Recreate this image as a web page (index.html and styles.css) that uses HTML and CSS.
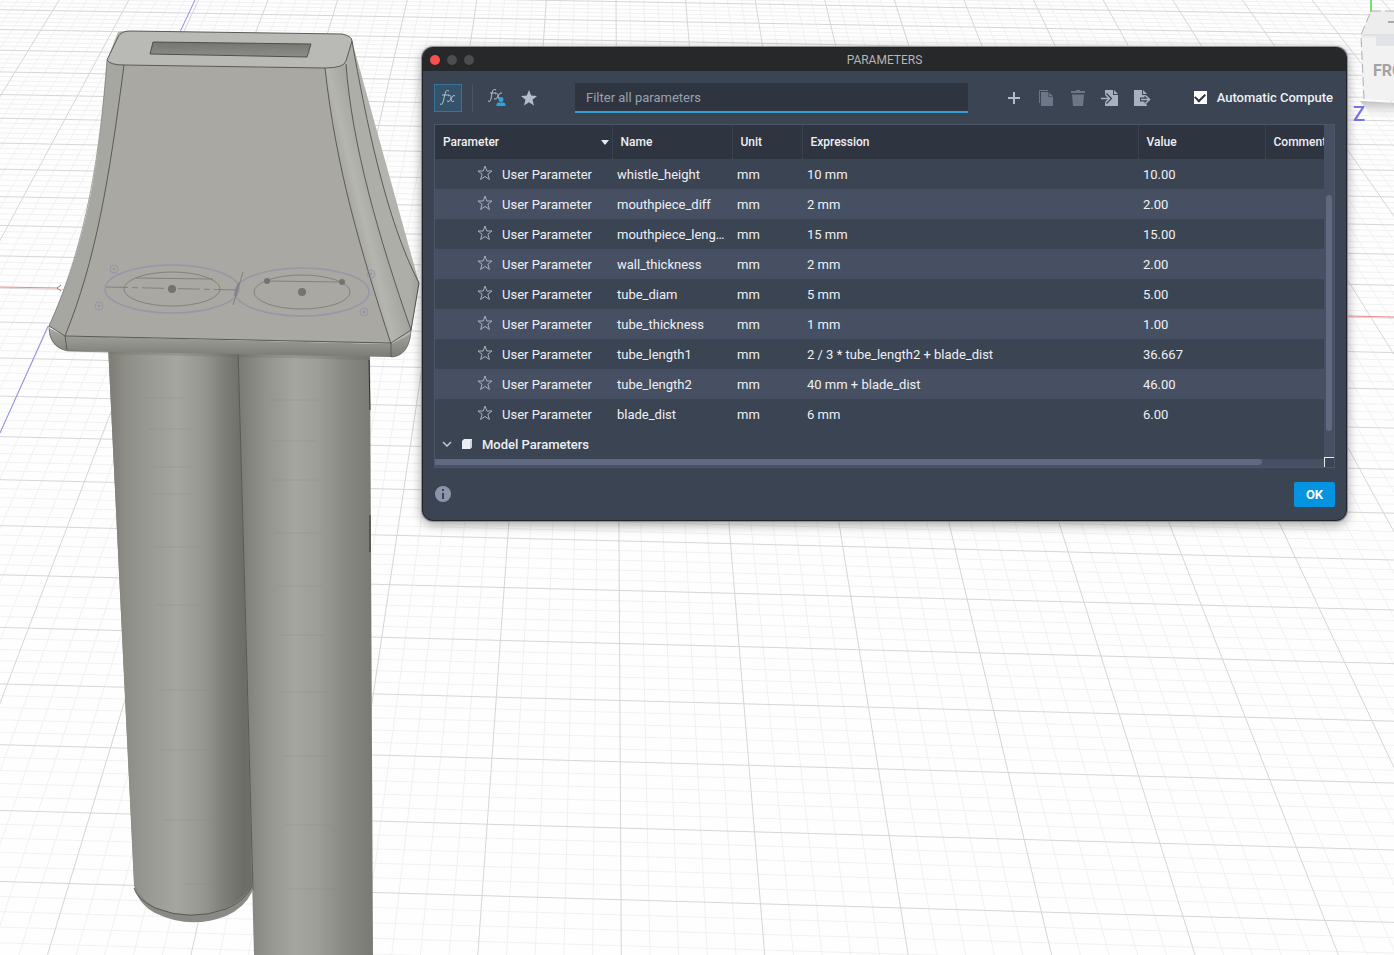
FILE: index.html
```html
<!DOCTYPE html>
<html lang="en">
<head>
<meta charset="utf-8">
<title>Parameters</title>
<link rel="stylesheet" href="styles.css">
</head>
<body>
<svg class="viewport" viewBox="0 0 1394 955" preserveAspectRatio="xMinYMin slice" aria-label="3D model view">
  <defs>
    <linearGradient id="tubeL" gradientUnits="userSpaceOnUse" x1="112" y1="0" x2="243" y2="0">
      <stop offset="0" stop-color="#80807a"/><stop offset=".1" stop-color="#8d8d86"/><stop offset=".3" stop-color="#9a9b94"/><stop offset=".5" stop-color="#a5a69f"/><stop offset=".7" stop-color="#95968f"/><stop offset=".88" stop-color="#7b7b76"/><stop offset="1" stop-color="#6e6e69"/>
    </linearGradient>
    <linearGradient id="tubeR" gradientUnits="userSpaceOnUse" x1="240" y1="0" x2="370" y2="0">
      <stop offset="0" stop-color="#7b7b76"/><stop offset=".2" stop-color="#92938c"/><stop offset=".42" stop-color="#a5a69f"/><stop offset=".6" stop-color="#9d9e97"/><stop offset=".8" stop-color="#898983"/><stop offset="1" stop-color="#7b7b76"/>
    </linearGradient>
    <linearGradient id="lip" x1="0" y1="0" x2="0" y2="1">
      <stop offset="0" stop-color="#a9a9a3"/><stop offset=".5" stop-color="#94948e"/><stop offset="1" stop-color="#7b7b76"/>
    </linearGradient>
    <linearGradient id="slot" x1="0" y1="0" x2="0" y2="1">
      <stop offset="0" stop-color="#74756f"/><stop offset="1" stop-color="#8d8e87"/>
    </linearGradient>
    <linearGradient id="edgeR" gradientUnits="userSpaceOnUse" x1="345" y1="200" x2="378" y2="192">
      <stop offset="0" stop-color="#a3a39d"/><stop offset=".4" stop-color="#b5b6b0"/><stop offset="1" stop-color="#a2a39c"/>
    </linearGradient>
    <linearGradient id="cubeShade" x1="0" y1="0" x2="0" y2="1">
      <stop offset="0" stop-color="#bdbdbd"/><stop offset="1" stop-color="#fff" stop-opacity="0"/>
    </linearGradient>
  </defs>
  <rect width="1394" height="955" fill="#fefefe"/>
  <g id="grid"></g>
  <path d="M195 0L180 32M48 326L0 433" stroke="#8d8de8" fill="none"/>
  <path d="M0 287L58 288M1347 316L1394 317" stroke="#e58c8c" fill="none"/>
  <path d="M61 285L57 288L61 291" stroke="#b06a6a" fill="none"/>

  <g class="tubes">
    <path d="M108 345L134 885Q137 903 155 913Q190 930 226 916Q244 908 252 892L252 345Z" fill="#8a8a84"/>
    <path d="M108 345L134 880Q137 897 155 907Q190 922 226 908Q246 898 252 885L243 345Z" fill="url(#tubeL)"/>
    <path d="M134 888Q137 899 155 908Q190 922 226 909Q246 900 252 886" class="edge"/>
    <path d="M238 345L254 955L373 955L370 345Z" fill="url(#tubeR)"/>
    <path d="M238 350L245 600L253 890" class="edge"/>
    <path d="M369 360L370 410M370 515L370 552" stroke="#30302e"/>
    <path class="mark" d="M145 398H184M148 429H190M151 467H190M152 494H193M154 547H200M156 605H200M158 690H207M160 750H208M163 820H209M184 884H210M270 400H318M272 441H316M273 480H318M275 533H322M277 586H323M279 635H325M281 692H327M283 756H330M285 825H331M288 889H334"/>
    <path d="M109 350H369V360L109 354Z" fill="#666661" opacity=".25"/>
  </g>
  <path d="M49 328C48 340 56 350 68 351L391 357C403 357 410 347 411 333L391 344L65 336Z" fill="url(#lip)"/>
  <path d="M118 32Q122 31 130 31L342 35Q350 36 352 41L419 283L411 333L391 344L65 336L49 326C89 240 98 170 107 60Z" fill="#b3b4ae"/>
  <path d="M124 65L325 68C336 168 360 248 391 344L65 336C96 260 109 180 124 65Z" fill="#a9a8a2"/>
  <path d="M107 62L124 65C109 180 96 260 65 336L49 326C88 240 100 160 107 62Z" fill="#a6a7a1"/>
  <path d="M325 68L346 65C353 150 378 235 411 330L391 344C360 248 336 168 325 68Z" fill="url(#edgeR)"/>
  <path d="M352 41L346 64C352 145 378 235 410 330L419 283C386 220 366 120 352 41Z" fill="#adaea8"/>
  <path d="M107 60L118 37Q121 31 130 31L342 34Q352 36 352 41L346 61Q344 68 325 68L124 65Q110 65 107 60Z" fill="#b9bab5"/>
  <path d="M153 42L311 44L307 57L150 54Z" fill="url(#slot)" stroke="#4f504c"/>
  <path d="M155 43L156 51L310 53" fill="none" stroke="#858680"/>
  <g class="edge">
    <path d="M107 60L118 37Q121 31 130 31L342 34Q352 36 352 41L346 61Q344 68 325 68L124 65Q110 65 107 60Z"/>
    <path d="M124 65C109 180 96 260 65 336M325 68C336 168 360 248 391 344M346 64C352 145 378 235 411 330"/>
    <path d="M352 41C366 120 386 220 419 283L411 330L391 343L65 336L49 326M65 336L67 350M391 343V357"/>
    <path d="M107 60C100 150 88 240 49 326C49 340 56 349 68 351L108 352" opacity=".55"/>
    <path d="M391 357C403 357 410 347 411 330" opacity=".55"/>
  </g>
  <g class="sketch">
    <ellipse cx="172" cy="289" rx="67" ry="24"/><ellipse cx="302" cy="292" rx="67" ry="24"/>
    <circle cx="114" cy="269" r="4"/><circle cx="99" cy="306" r="4"/><circle cx="371" cy="274" r="4"/><circle cx="364" cy="312" r="4"/>
    <g fill="#8984ac"><circle cx="114" cy="269" r="1"/><circle cx="99" cy="306" r="1"/><circle cx="371" cy="274" r="1"/><circle cx="364" cy="312" r="1"/></g>
  </g>
  <g class="construction">
    <ellipse cx="172" cy="289" rx="48" ry="17"/><ellipse cx="302" cy="292" rx="48" ry="17"/>
    <path d="M136 278L213 279M267 281L342 282M243 272L233 305"/>
    <path d="M106 287L238 290" stroke-dasharray="22 4 6 4"/>
    <path d="M239 283L235 296" stroke-width="2"/>
    <g fill="#73746f" stroke="none"><circle cx="172" cy="289" r="4"/><circle cx="302" cy="292" r="4"/><circle cx="267" cy="281" r="3"/><circle cx="342" cy="282" r="3"/></g>
  </g>

  <g class="cube">
    <path d="M1360 101L1394 103V122L1372 116Z" fill="url(#cubeShade)"/>
    <path d="M1363 98L1361 35L1371 11H1394V101Z" fill="#ededed"/>
    <path d="M1362 38H1394V101L1363 99Z" fill="#f2f2f2"/>
    <path d="M1376 36H1394V46H1376Z" fill="#e2e3e8"/>
    <path d="M1364 99L1361 35L1371 11H1394" fill="none" stroke="#b0b0b0" stroke-dasharray="9 4"/>
    <path d="M1362 35H1394" stroke="#d4d4d4"/>
    <path d="M1388 22H1394" stroke="#a9a9a9" stroke-width="2"/>
    <path d="M1371 0V12" stroke="#76df76" stroke-width="2"/>
    <text x="1373" y="76" class="cube-face">FRO</text>
    <text x="1353" y="121" class="cube-axis">Z</text>
  </g>
</svg>

<section class="dialog" role="dialog" aria-labelledby="dialog-title">
  <header class="titlebar">
    <div class="lights"><button class="light light-close" aria-label="Close"></button><button class="light" aria-label="Minimize"></button><button class="light" aria-label="Zoom"></button></div>
    <h1 class="title" id="dialog-title">PARAMETERS</h1>
  </header>

  <div class="toolbar">
    <button class="tool tool-active" aria-label="All parameters"><svg width="28" height="28" viewBox="0 0 28 28"><path d="M15 7Q12 5 11 10L9 18Q8 22 6 20M8 11H15M14 12Q17 10 17 14Q17 19 20 17M21 12Q19 10 17 15Q15 19 13 17" class="stroke"/></svg></button>
    <span class="divider"></span>
    <button class="tool" aria-label="User parameters"><svg width="28" height="28" viewBox="0 0 28 28"><path d="M13 6Q10 4 9 9L8 15Q7 19 5 17M7 9H13M12 10Q15 8 15 12Q15 16 17 14M19 9Q17 8 15 12Q14 16 11 15" class="stroke"/><circle cx="18" cy="15.500" r="2.500" fill="#2ba3dc"/><path d="M13.500 22V20.500Q13.500 18.500 16 18.500H20Q22.500 18.500 22.500 20.500V22Z" fill="#2ba3dc"/></svg></button>
    <button class="tool" aria-label="Favorites"><svg width="28" height="28" viewBox="0 0 28 28"><path d="M14 6L16.200 11.600L22 12L17.500 15.700L19 21.500L14 18.300L9 21.500L10.500 15.700L6 12L11.800 11.600Z" fill="#b6bdca"/></svg></button>
    <input class="filter" type="text" placeholder="Filter all parameters" aria-label="Filter all parameters">
    <div class="actions">
      <button class="tool" aria-label="Add"><svg width="28" height="28" viewBox="0 0 28 28"><path d="M14 8V20M8 14H20" stroke="#b4bbc8" stroke-width="2"/></svg></button>
      <button class="tool" aria-label="Copy"><svg width="28" height="28" viewBox="0 0 28 28"><path d="M7.500 19V6.500H16" fill="none" stroke="#6d7687"/><path d="M9 8H16L21 12V22H9Z" fill="#6d7687"/><path d="M16.500 8V12.500H21" fill="none" stroke="#4a5466"/></svg></button>
      <button class="tool" aria-label="Delete"><svg width="28" height="28" viewBox="0 0 28 28"><path d="M7 7H12V6H16V7H21V9H7ZM8 10.500H20L19 22H9Z" fill="#6d7687"/></svg></button>
      <button class="tool" aria-label="Import"><svg width="28" height="28" viewBox="0 0 28 28"><path d="M9 6H17V11H22V22H9ZM18 6L22 10H18Z" fill="#a9b0be"/><path d="M5 14.500H13M9.500 10.500L13.500 14.500L9.500 18.500" fill="none" stroke="#3b4453" stroke-width="4"/><path d="M5 14.500H13M9.500 10.500L13.500 14.500L9.500 18.500" fill="none" stroke="#a9b0be" stroke-width="1.500"/></svg></button>
      <button class="tool" aria-label="Export"><svg width="28" height="28" viewBox="0 0 28 28"><path d="M6 6H14V11H19V22H6ZM15 6L19 10H15Z" fill="#a9b0be"/><path d="M12 15.500H20M17.500 11.500L21.500 15.500L17.500 19.500" fill="none" stroke="#3b4453" stroke-width="4"/><path d="M13 15.500H21M17.500 11.500L21.500 15.500L17.500 19.500" fill="none" stroke="#a9b0be" stroke-width="1.500"/></svg></button>
    </div>
    <label class="auto"><input class="check" type="checkbox" checked>Automatic Compute</label>
  </div>

  <div class="panel">
    <div class="sheet">
      <table class="grid">
        <colgroup><col class="c-param"><col class="c-name"><col class="c-unit"><col><col class="c-value"><col class="c-comment"></colgroup>
        <thead><tr><th><span class="sort">Parameter<svg width="8" height="5" viewBox="0 0 8 5"><path d="M0 0H8L4 5Z" fill="#e8ebf0"/></svg></span></th><th>Name</th><th>Unit</th><th>Expression</th><th>Value</th><th>Comment</th></tr></thead>
        <tbody id="rows"></tbody>
        <tbody><tr class="group"><td colspan="6"><span class="group-label"><svg width="10" height="6" viewBox="0 0 10 6"><path d="M1 1L5 5L9 1" fill="none" stroke="#c3c9d4" stroke-width="1.500"/></svg><svg width="12" height="12" viewBox="0 0 12 12"><path d="M1 3L3 1H11V9L9 11H1Z" fill="#eceef2"/><path d="M9 3L11 1V9L9 11Z" fill="#cfd3da"/></svg>Model Parameters</span></td></tr></tbody>
      </table>
      <div class="vbar"><div class="vthumb"></div></div>
    </div>
    <div class="hbar"><div class="hthumb"></div><span class="corner"></span></div>
  </div>

  <footer class="footer">
    <button class="info" aria-label="Information"><svg width="16" height="16" viewBox="0 0 16 16"><circle cx="8" cy="8" r="8" fill="#8b96ac"/><path d="M8 3V5M8 7V13" stroke="#3b4453" stroke-width="2"/></svg></button>
    <button class="ok">OK</button>
  </footer>
</section>
<script src="script.js"></script>
</body>
</html>
```
FILE: styles.css
```css
* { box-sizing: border-box; }
body { margin: 0; min-height: 100vh; overflow: hidden; background: #fefefe; font-family: Roboto, "Noto Sans", sans-serif; font-size: 13px; color: #eef0f4; }
button { padding: 0; border: 0; background: none; font: inherit; color: inherit; }
svg { display: block; }
.viewport { position: absolute; inset: 0; width: 100%; height: 100%; }
.major { stroke: #d6d6d6; fill: none; }
.minor { stroke: #f1f1f1; fill: none; }
.edge { stroke: #5a5b57; fill: none; }
.mark { stroke: #83847e; opacity: .3; fill: none; }
.sketch { stroke: #9692aa; stroke-width: 1.5; fill: none; opacity: .8; }
.sketch circle { stroke-width: 1; }
.construction { stroke: #82827e; fill: none; }
.cube-face { font: 700 16px Roboto, sans-serif; fill: #a3a3a3; }
.cube-axis { font: 500 20px Roboto, sans-serif; fill: #7a70f0; }

.dialog { position: absolute; top: 47px; left: 422px; right: 47px; border: 1px solid #20242a; border-radius: 11px; overflow: hidden; background: #3b4453; box-shadow: 0 0 0 1px #8f9296, 0 3px 12px rgba(0, 0, 0, .4); }
.titlebar { display: grid; grid-template-columns: 1fr auto 1fr; align-items: center; height: 23px; padding: 0 7px; background: #262829; }
.lights { display: flex; gap: 7px; }
.light { width: 10px; height: 10px; border-radius: 50%; background: #4c4d4e; }
.light-close { background: #fb4f4e; }
.title { margin: 0; font: 400 12px Roboto, sans-serif; color: #b4b5b6; }

.toolbar { display: flex; align-items: center; height: 53px; padding: 0 13px 0 11px; }
.tool { flex: none; width: 28px; height: 28px; }
.tool + .tool { margin-left: 4px; }
.tool-active { background: #34536a; box-shadow: inset 0 0 0 1px #35739a; }
.stroke { fill: none; stroke: #b7bdc9; }
.divider { width: 1px; height: 28px; margin: 0 10px; background: #4b5566; }
.filter { flex: 1; min-width: 0; height: 30px; margin: 0 32px; padding: 2px 11px 0; border: 0; border-bottom: 2px solid #35a0d3; border-radius: 0; background: #2e3440; font: inherit; color: #eef0f4; outline: 0; }
.filter::placeholder { color: #9ba2af; opacity: 1; }
.actions { display: flex; }
.auto { display: flex; align-items: center; gap: 10px; margin-left: 38px; font-weight: 500; white-space: nowrap; }
.check { appearance: none; width: 13px; height: 13px; margin: 0; background: #fff; display: grid; place-items: center; }
.check:checked::before { content: ""; width: 8px; height: 5px; border: solid #2e3440; border-width: 0 0 2px 2px; transform: translateY(-1px) rotate(-45deg); }

.panel { margin: 0 11px; border: 1px solid #4b5669; background: #475063; }
.sheet { display: grid; grid-template-columns: minmax(0, 1fr) 10px; overflow: hidden; }
.grid { width: 100%; table-layout: fixed; border-collapse: collapse; }
.c-param { width: 177px; }
.c-name { width: 120px; }
.c-unit { width: 70px; }
.c-value { width: 127px; }
.c-comment { width: 59px; }
.grid th { height: 34px; padding: 0 0 0 8px; border-right: 1px solid #3a4250; background: #2e3440; font-size: 12px; font-weight: 500; text-align: left; white-space: nowrap; overflow: hidden; }
.grid th:last-child { padding-right: 0; border-right: 0; }
.grid td { height: 30px; padding: 0 2px 0 5px; white-space: nowrap; overflow: hidden; text-overflow: ellipsis; }
.grid tr:nth-child(odd) td { background: #3b4453; }
.grid .group td { background: #475063; font-weight: 500; }
.sort { display: flex; align-items: center; justify-content: space-between; padding-right: 3px; }
.param { display: flex; align-items: center; gap: 9px; padding-left: 37px; }
.group-label { display: flex; align-items: center; gap: 9px; padding-left: 2px; }
.vbar { padding: 70px 2px 28px; }
.vthumb { height: 100%; border-radius: 3px; background: #5f6a80; }
.hbar { display: flex; align-items: flex-start; justify-content: space-between; height: 8px; }
.hthumb { flex: 0 0 92%; height: 6px; border-radius: 0 3px 3px 0; background: #5f6a80; }
.corner { width: 10px; height: 10px; margin-top: -2px; border: solid #e8ebf0; border-width: 1px 0 0 1px; background: #3b4453; }

.footer { display: flex; align-items: center; justify-content: space-between; height: 52px; padding: 0 11px 0 12px; }
.ok { width: 41px; height: 25px; border-radius: 2px; background: #0693df; font-weight: 700; color: #fff; }
```
FILE: script.js
```js
const NS = 'http://www.w3.org/2000/svg';
const grid = document.getElementById('grid');

// Ground plane: both line families converge on a horizon far above the view.
const vanish = { x: 611, y: -900 };
function line(x1, y1, x2, y2, major) {
  const el = document.createElementNS(NS, 'path');
  el.setAttribute('d', `M${x1.toFixed(1)} ${y1.toFixed(1)}L${x2.toFixed(1)} ${y2.toFixed(1)}`);
  el.setAttribute('class', major ? 'major' : 'minor');
  grid.appendChild(el);
}
for (const pass of [false, true]) {
  for (let i = -110; i <= 25; i++) {
    if ((i % 5 === 0) !== pass) continue;
    const y = 1 / (6.4788e-4 - 2.306e-5 * i / 5) + vanish.y;
    const slope = 0.0215 + (y - 300) * 0.0000131;
    line(0, y - 620 * slope, 1394, y + 774 * slope, pass);
  }
  for (let j = -60; j <= 60; j++) {
    if ((j % 5 === 0) !== pass) continue;
    const step = (619.3 + 116 * j / 5 - vanish.x) / 1500;
    line(vanish.x + step * 900, 0, vanish.x + step * 1855, 955, pass);
  }
}

const params = [
  ['whistle_height', 'mm', '10 mm', '10.00'],
  ['mouthpiece_diff', 'mm', '2 mm', '2.00'],
  ['mouthpiece_leng…', 'mm', '15 mm', '15.00'],
  ['wall_thickness', 'mm', '2 mm', '2.00'],
  ['tube_diam', 'mm', '5 mm', '5.00'],
  ['tube_thickness', 'mm', '1 mm', '1.00'],
  ['tube_length1', 'mm', '2 / 3 * tube_length2 + blade_dist', '36.667'],
  ['tube_length2', 'mm', '40 mm + blade_dist', '46.00'],
  ['blade_dist', 'mm', '6 mm', '6.00'],
];
const star = '<svg width="16" height="16" viewBox="0 0 16 16"><path d="M8 0L9.800 5H15L10.900 8.200L12.400 13.500L8 10.400L3.600 13.500L5.100 8.200L1 5H6.200Z" fill="none" stroke="#a8b0be"/></svg>';
document.getElementById('rows').innerHTML = params.map(p =>
  `<tr><td><span class="param">${star}User Parameter</span></td>${p.map(v => `<td>${v}</td>`).join('')}<td></td></tr>`
).join('');
```
